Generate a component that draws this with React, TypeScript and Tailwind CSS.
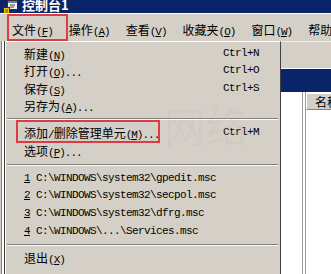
import React from 'react'

const cjk = "font-['Noto_Sans_CJK_SC',sans-serif]"
const mono = "font-['Liberation_Mono',monospace]"

// ascii runs rendered narrow, like the half-width glyphs of the old UI font
function Mixed({ text }: { text: string }) {
  const parts = text.split(/([\x00-\x7f]+)/)
  return (
    <>
      {parts.map((p, i) =>
        i % 2 === 1 ? (
          <span key={i} className={`${mono} text-[11px] tracking-[-1px]`}>{p}</span>
        ) : (
          <span key={i} className={`${cjk} text-[12px]`}>{p}</span>
        )
      )}
    </>
  )
}

function Label({ text, k, dots }: { text: string; k: string; dots?: boolean }) {
  return (
    <span className="whitespace-nowrap leading-none">
      <Mixed text={text} />
      <span className={`${mono} text-[11px] tracking-[-1px]`}>
        (<span className="underline underline-offset-[1px]">{k}</span>){dots ? '...' : ''}
      </span>
    </span>
  )
}

function Sep() {
  return (
    <div className="h-[9px] flex items-center ml-[1px] mr-[2px]">
      <div className="h-[2px] w-full border-t border-t-[#808080] border-b border-b-white" />
    </div>
  )
}

const menuBar = [
  { t: '文件', k: 'F' },
  { t: '操作', k: 'A' },
  { t: '查看', k: 'V' },
  { t: '收藏夹', k: 'O' },
  { t: '窗口', k: 'W' },
  { t: '帮助', k: 'H' },
]

const top = [
  { t: '新建', k: 'N', s: 'Ctrl+N' },
  { t: '打开', k: 'O', s: 'Ctrl+O', dots: true },
  { t: '保存', k: 'S', s: 'Ctrl+S' },
  { t: '另存为', k: 'A', dots: true },
]

const recent = [
  'C:\\WINDOWS\\system32\\gpedit.msc',
  'C:\\WINDOWS\\system32\\secpol.msc',
  'C:\\WINDOWS\\system32\\dfrg.msc',
  'C:\\WINDOWS\\...\\Services.msc',
]

function ConsoleIcon() {
  return (
    <svg width="17" height="14" viewBox="0 0 17 14" className="shrink-0">
      <rect x="5.5" y="0.5" width="10" height="9" fill="#f4f4f4" stroke="#303030" />
      <rect x="6" y="1" width="9" height="2" fill="#6a7ba8" />
      <path d="M8 5h5M8 7h4" stroke="#404040" />
      <rect x="1.5" y="7.5" width="6" height="6" fill="#f2c400" stroke="#3a3000" />
      <path d="M3 10h3M3 12h3" stroke="#6b5300" />
    </svg>
  )
}

export default function App() {
  return (
    <div className="relative w-[331px] h-[274px] overflow-hidden bg-[#d4d0c8] text-black">
      {/* Title bar */}
      <div className="h-[13px] bg-[#0a246a] flex items-start pl-[2px] gap-[3px] overflow-hidden">
        <ConsoleIcon />
        <span className={`${cjk} text-[13px] font-bold text-white leading-none -mt-[2px] whitespace-nowrap`}>
          控制台1
        </span>
      </div>

      {/* Menu bar */}
      <div className="relative h-[28px] border-t border-t-white flex pl-[4px] pt-[5px]">
        {menuBar.map(m => (
          <div key={m.t} className="px-[8px] shrink-0 flex items-center h-[20px]">
            <Label text={m.t} k={m.k} />
          </div>
        ))}
        <div className="absolute left-[7px] top-[0px] w-[61px] h-[27px] border-2 border-[#dc3d45]" />
      </div>

      {/* Body */}
      <div className="flex h-[233px]">
        {/* edge of the window behind */}
        <div className="w-[5px] flex shrink-0">
          <div className="w-[1px]" />
          <div className="w-[1px] bg-[#808080]" />
          <div className="w-[2px] bg-white" />
          <div className="w-[1px] bg-[#404040]" />
        </div>

        {/* File menu */}
        <div className="w-[276px] shrink-0 border-t border-t-white border-l border-l-white border-r border-r-[#404040] pt-[2px] flex flex-col">
          {top.map(it => (
            <div key={it.t} className="h-[17.5px] flex items-center pl-[18px]">
              <div className="flex-1"><Label text={it.t} k={it.k} dots={it.dots} /></div>
              <span className={`${mono} text-[11px] tracking-[-0.6px] w-[57px] shrink-0`}>{it.s ?? ''}</span>
            </div>
          ))}
          <Sep />
          <div className="relative h-[18px] flex items-center pl-[18px]">
            <div className="flex-1"><Label text="添加/删除管理单元" k="M" dots /></div>
            <span className={`${mono} text-[11px] tracking-[-0.6px] w-[57px] shrink-0`}>Ctrl+M</span>
            <div className="absolute left-[10px] -top-[3px] w-[144px] h-[23px] border-2 border-[#dc3d45]" />
          </div>
          <div className="h-[19px] flex items-center pl-[18px]">
            <Label text="选项" k="P" dots />
          </div>
          <Sep />
          {recent.map((p, i) => (
            <div key={p} className={`h-[17.75px] flex items-center pl-[18px] ${mono} text-[11px] tracking-[-0.6px] whitespace-nowrap`}>
              <span className="underline underline-offset-[1px]">{i + 1}</span>
              <span>&nbsp;{p}</span>
            </div>
          ))}
          <Sep />
          <div className="h-[17.5px] flex items-center pl-[18px]">
            <Label text="退出" k="X" />
          </div>
        </div>

        {/* Console window behind the menu */}
        <div className="w-[50px] shrink-0 flex flex-col">
          <div className="h-[28px] border-t border-t-[#ececec] border-b border-b-white" />
          <div className="h-[23px] bg-[#0a246a]" />
          <div className="flex-1 flex bg-white">
            <div className="w-[21px]" />
            <div className="w-[1px] bg-[#9a9a9a]" />
            <div className="w-[2px]" />
            <div className="w-[1px] bg-[#9a9a9a]" />
            <div className="flex-1 pt-[1px] overflow-hidden">
              <div className="h-[17px] bg-[#d4d0c8] border-t border-l border-white border-b border-b-[#808080] flex items-center pl-[8px]">
                <span className={`${cjk} text-[12px] leading-none whitespace-nowrap`}>名称</span>
              </div>
            </div>
          </div>
        </div>
      </div>

      {/* faint watermark */}
      <div className={`absolute left-[164px] top-[104px] pointer-events-none ${cjk} text-[42px] leading-none text-[#d9a9ab]/20 whitespace-nowrap`}>
        网络
      </div>
    </div>
  )
}
